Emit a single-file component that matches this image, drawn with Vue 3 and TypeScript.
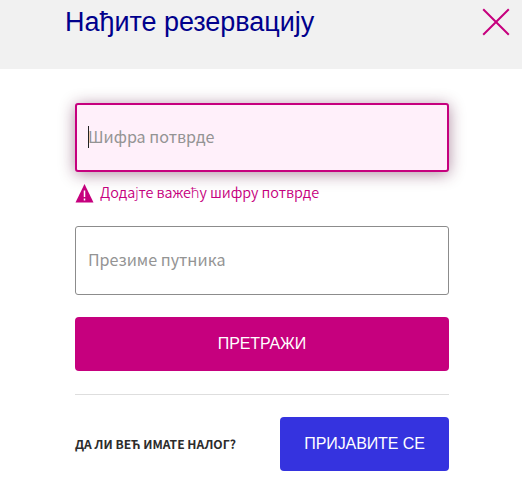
<script setup lang="ts">
import { ref } from 'vue'

const code = ref('')
const surname = ref('')
</script>

<template>
  <main class="dialog">
    <header class="head">
      <h1 class="title">Нађите резервацију</h1>
      <button class="close" type="button">
        <svg width="28" height="28" viewBox="0 0 28 28"><path d="M1.2 1.2 26.8 26.8M26.8 1.2 1.2 26.8" /></svg>
      </button>
    </header>
    <form class="form" @submit.prevent>
      <div class="field invalid">
        <input v-model="code" class="input" type="text" placeholder="Шифра потврде" />
        <span class="caret"></span>
      </div>
      <p class="error">
        <svg class="warn" width="19" height="19" viewBox="0 0 19 19">
          <path class="tri" d="M9.5 0 18.5 18.5H.5Z" />
          <path class="mark" d="M9.5 6.5v6.5M9.5 14.5v2" />
        </svg>
        <span class="message">Додајте важећу шифру потврде</span>
      </p>
      <div class="field">
        <input v-model="surname" class="input" type="text" placeholder="Презиме путника" />
      </div>
      <button class="search" type="submit"><span>ПРЕТРАЖИ</span></button>
      <div class="account">
        <strong class="question">ДА ЛИ ВЕЋ ИМАТЕ НАЛОГ?</strong>
        <button class="login" type="button"><span>ПРИЈАВИТЕ СЕ</span></button>
      </div>
    </form>
  </main>
</template>

<style>
body {
  background: #fff;
}
</style>

<style scoped>
.dialog {
  width: 522px;
  height: 490px;
  overflow: hidden;
  background: #fff;
  font-family: "Noto Sans CJK SC", "Noto Sans", sans-serif;
}
.head {
  box-sizing: border-box;
  height: 69px;
  padding: 6px 12px 0 65px;
  display: flex;
  justify-content: space-between;
  align-items: flex-start;
  background: #f1f1f1;
}
.title {
  margin: 0;
  font: 400 27px/32px "Liberation Sans", Arial, sans-serif;
  letter-spacing: -0.04px;
  color: #00008c;
  white-space: nowrap;
}
button {
  margin: 0;
  border: 0;
  padding: 0;
}
.close {
  margin-top: 2px;
  width: 28px;
  height: 28px;
  background: none;
}
.close svg {
  display: block;
  fill: none;
  stroke: #c6007e;
  stroke-width: 2;
}
.form {
  width: 374px;
  padding: 34px 0 0 75px;
}
.field {
  position: relative;
  box-sizing: border-box;
  height: 69px;
  border: 1px solid #8c8c8c;
  border-radius: 3px;
  padding: 0 12px;
  background: #fff;
}
.invalid {
  border: 2px solid #c6007e;
  padding: 0 11px;
  background: #fff0fa;
  box-shadow: 0 2px 16px rgba(80, 0, 50, 0.46);
}
.input {
  display: block;
  box-sizing: border-box;
  width: 100%;
  height: 100%;
  border: 0;
  padding: 0 0 3px;
  outline: 0;
  background: transparent;
  font: inherit;
  font-size: 16.1px;
}
.input::placeholder {
  color: #949494;
  opacity: 1;
}
.caret {
  position: absolute;
  left: 11px;
  top: 21px;
  width: 1px;
  height: 22px;
  background: #222;
}
.error {
  margin: 0;
  height: 54px;
  box-sizing: border-box;
  padding-top: 10px;
  display: flex;
  align-items: flex-start;
  gap: 6px;
  color: #c6007e;
}
.warn {
  margin-top: 2px;
}
.tri {
  fill: #c6007e;
}
.mark {
  stroke: #fff;
  stroke-width: 1.5;
}
.message {
  margin-top: -1px;
  font-family: "Noto Sans CJK SC DemiLight", "Noto Sans CJK SC", "Noto Sans", sans-serif;
  font-size: 14.4px;
  font-weight: 350;
  letter-spacing: -0.05px;
  line-height: 22px;
  white-space: nowrap;
}
.search,
.login {
  display: block;
  height: 54px;
  border-radius: 4px;
  color: #fff;
  font: 400 16px/54px "Liberation Sans", Arial, sans-serif;
  letter-spacing: -0.1px;
}
.search {
  width: 100%;
  margin-top: 22px;
  background: #c6007e;
}
.account {
  margin-top: 23px;
  border-top: 1px solid #dedede;
  padding-top: 22px;
  display: flex;
  justify-content: space-between;
  align-items: center;
}
.question {
  font-size: 12.1px;
  line-height: 20px;
  color: #2c2c2c;
  white-space: nowrap;
}
.login {
  width: 169px;
  background: #3533df;
}
</style>
